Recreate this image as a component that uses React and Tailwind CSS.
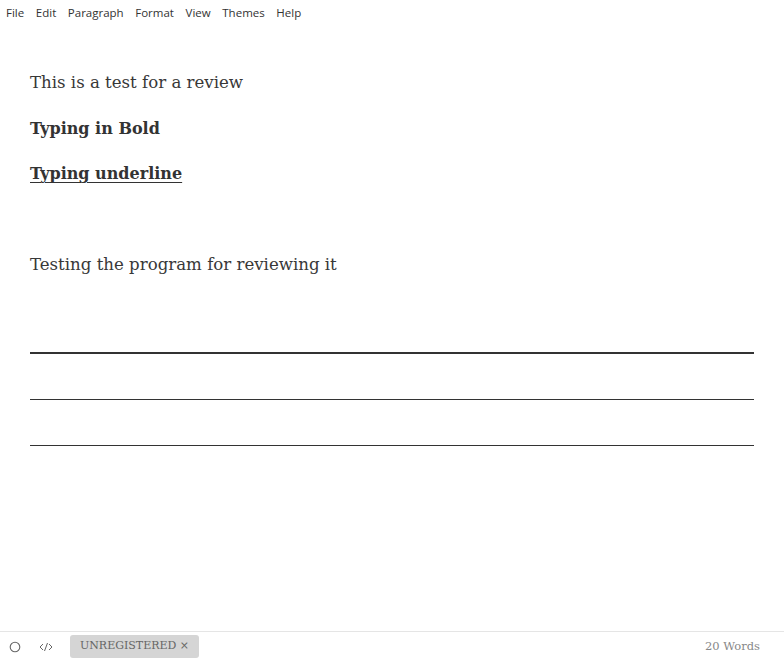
import React from 'react'

const App = () => {
  return (
    <div className="w-[784px] h-[661px] bg-white flex flex-col overflow-hidden">
      {/* Menu bar */}
      <div className="h-[26px] flex items-center px-[6px] gap-[11.6px] text-[11.5px] text-[#333] font-['Open_Sans',sans-serif]">
        <span>File</span>
        <span>Edit</span>
        <span>Paragraph</span>
        <span>Format</span>
        <span>View</span>
        <span>Themes</span>
        <span>Help</span>
      </div>

      {/* Editor */}
      <main className="flex-1 px-[30px] pt-[45px] text-[#383838] font-['DejaVu_Serif',serif] text-[16.6px]">
        <p className="leading-[24px]">This is a test for a review</p>
        <p className="leading-[24px] mt-[22px] font-bold text-[16px] text-[#333]">Typing in Bold</p>
        <p className="leading-[24px] mt-[21px] font-bold text-[16px] text-[#333] underline underline-offset-[3px]">Typing underline</p>
        <p className="leading-[24px] mt-[67px]">Testing the program for reviewing it</p>
        <hr className="mt-[75px] w-[724px] border-0 h-[2px] bg-[#333]" />
        <hr className="mt-[45px] w-[724px] border-0 h-[1px] bg-[#333]" />
        <hr className="mt-[45px] w-[724px] border-0 h-[1px] bg-[#333]" />
      </main>

      {/* Status bar */}
      <footer className="h-[30px] border-t border-[#e5e5e5] flex items-center pl-[9px] pr-[24px] font-['DejaVu_Serif',serif]">
        <svg width="12" height="12" viewBox="0 0 12 12" className="text-[#666]">
          <circle cx="6" cy="6" r="4.8" fill="none" stroke="currentColor" strokeWidth="1.1" />
        </svg>
        <svg width="16" height="12" viewBox="0 0 16 12" className="ml-[17px] text-[#666]">
          <path d="M5 3 L2 6 L5 9 M11 3 L14 6 L11 9 M9.5 2 L6.5 10" fill="none" stroke="currentColor" strokeWidth="1" />
        </svg>
        <div className="ml-[16px] h-[23px] w-[129px] rounded-[3px] bg-[#d5d5d5] flex items-center justify-center text-[11px] text-[#666]">
          UNREGISTERED ×
        </div>
        <div className="ml-auto text-[11.5px] text-[#888]">20 Words</div>
      </footer>
    </div>
  )
}

export default App
